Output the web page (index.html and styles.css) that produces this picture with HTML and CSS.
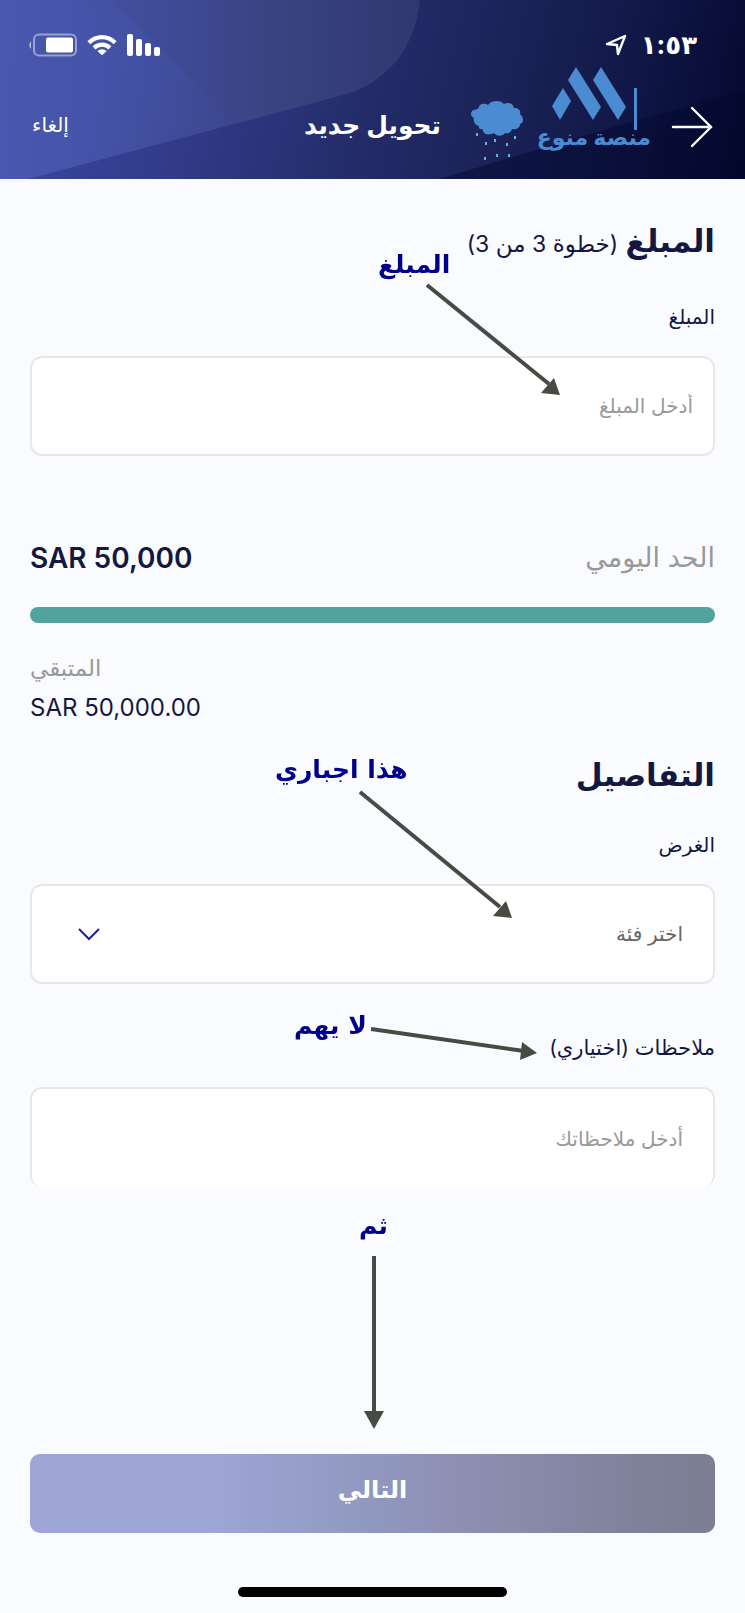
FILE: index.html
```html
<!DOCTYPE html>
<html lang="ar" dir="rtl">
<head>
<meta charset="utf-8">
<meta name="viewport" content="width=device-width, initial-scale=1">
<title>تحويل جديد</title>
<link rel="stylesheet" href="styles.css">
</head>
<body>
<div class="page">
  <header class="header">
    <svg class="header-art" viewBox="0 0 745 178" preserveAspectRatio="none" aria-hidden="true">
      <defs>
        <linearGradient id="base" x1="0" y1="0" x2="745" y2="178" gradientUnits="userSpaceOnUse">
          <stop offset="0" stop-color="#3d4aa4"/>
          <stop offset="0.25" stop-color="#323c8b"/>
          <stop offset="0.52" stop-color="#222b66"/>
          <stop offset="0.8" stop-color="#131a4a"/>
          <stop offset="1" stop-color="#03082e"/>
        </linearGradient>
        <linearGradient id="wave" x1="0" y1="0" x2="420" y2="0" gradientUnits="userSpaceOnUse">
          <stop offset="0" stop-color="#4b59ae"/>
          <stop offset="0.4" stop-color="#3f4b96"/>
          <stop offset="0.7" stop-color="#38427f"/>
          <stop offset="1" stop-color="#2f386f"/>
        </linearGradient>
        <linearGradient id="facet" x1="0" y1="0" x2="226" y2="119" gradientUnits="userSpaceOnUse">
          <stop offset="0" stop-color="#4656b4" stop-opacity="0.2"/>
          <stop offset="0.5" stop-color="#4656b4" stop-opacity="0.4"/>
          <stop offset="1" stop-color="#4656b4" stop-opacity="0.05"/>
        </linearGradient>
      </defs>
      <rect width="745" height="178" fill="url(#base)"/>
      <path d="M0 0H420C416 34 402 62 376 79C368 85 358 90 345 94L35 176L28 178H0Z" fill="url(#wave)"/>
      <path d="M0 0H108C150 36 190 76 226 119L224 126L35 176L28 178H0Z" fill="url(#facet)"/>
      <path d="M745 91C640 117 540 148 440 178H745Z" fill="#02062c" opacity="0.45"/>
    </svg>

    <div class="status">
      <div class="status-group">
        <span class="clock">١:٥٣</span>
        <svg width="22" height="22" viewBox="0 0 22 22" aria-hidden="true"><path d="M2 10L20 2L13 20L12 11Z" fill="none" stroke="#fff" stroke-width="2.400" stroke-linejoin="round"/></svg>
      </div>
      <div class="status-group">
        <svg width="36" height="24" viewBox="0 0 36 24" fill="#fff" aria-hidden="true"><rect x="1" y="1" width="6" height="22" rx="2"/><rect x="10" y="6" width="6" height="17" rx="2"/><rect x="19" y="10" width="6" height="13" rx="2"/><rect x="28" y="14" width="6" height="9" rx="2"/></svg>
        <svg width="30" height="24" viewBox="0 0 32 24" aria-hidden="true"><path d="M2 9.500C10 1.500 22 1.500 30 9.500M7.500 15C12.500 10.500 19.500 10.500 24.500 15" fill="none" stroke="#fff" stroke-width="4.500"/><path d="M11 18.500Q16 14.500 21 18.500L16 23Z" fill="#fff"/></svg>
        <svg width="50" height="24" viewBox="0 0 50 24" aria-hidden="true"><path d="M3 8Q-0.500 12 3 16Z" fill="#fff" opacity="0.6"/><rect x="6" y="1.500" width="42" height="21" rx="5" fill="none" stroke="#fff" stroke-opacity="0.45" stroke-width="2"/><rect x="18" y="4.500" width="27" height="15" rx="2" fill="#fff"/></svg>
      </div>
    </div>

    <nav class="nav">
      <div class="nav-start">
        <button class="back" type="button" aria-label="رجوع">
          <svg width="42" height="42" viewBox="0 0 42 42" aria-hidden="true"><path d="M2 21H40M21 2L40 21L21 40" fill="none" stroke="#fff" stroke-width="2.400" stroke-linecap="round"/></svg>
        </button>
        <div class="brand">
          <svg class="brand-mark" width="114" height="84" viewBox="0 0 114 84" fill="#4a8bd2" aria-hidden="true">
            <path d="M26 21L34 34L23 53L15 39Z"/><path d="M39 0L64 40L56 53L31 13Z"/><path d="M64 0L89 40L81 53L56 13Z"/><rect x="97" y="21" width="3" height="42"/>
          </svg>
          <span class="brand-name">منصة منوع</span>
        </div>
        <svg class="cloud" width="54" height="62" viewBox="0 0 54 62" aria-hidden="true">
          <path d="M9 26C5 25 3 22 4 18C0 16 0 11 4 10C7 9 8 9 9 7C10 3 15 3 18 5C21 0 31 0 34 4C38 2 43 3 44 8C49 8 51 11 50 14C54 17 54 23 50 24C50 28 46 30 42 29C41 33 37 34 35 33C32 37 26 36 24 33C18 36 12 34 13 29C10 30 8 28 9 26Z" fill="#4a8bd2"/>
          <g fill="#5ab4e6"><rect x="6" y="33" width="2" height="3"/><rect x="15" y="42" width="2" height="3"/><rect x="24" y="39" width="2" height="3"/><rect x="36" y="43" width="2" height="3"/><rect x="44" y="36" width="2" height="3"/><rect x="14" y="57" width="2" height="3"/><rect x="26" y="54" width="2" height="3"/><rect x="38" y="54" width="2" height="3"/></g>
        </svg>
      </div>
      <h1 class="nav-title">تحويل جديد</h1>
      <button class="cancel" type="button">إلغاء</button>
    </nav>
  </header>

  <form class="form">
    <h2 class="heading">المبلغ <span class="step">(خطوة 3 من 3)</span></h2>
    <label class="label" for="amount">المبلغ</label>
    <input class="field" id="amount" type="text" inputmode="decimal" placeholder="أدخل المبلغ">

    <section class="limit">
      <div class="limit-row">
        <span class="limit-name">الحد اليومي</span>
        <bdi class="limit-total">SAR 50,000</bdi>
      </div>
      <div class="meter" role="progressbar" aria-label="الحد اليومي" aria-valuenow="100"></div>
      <div class="remaining">
        <span class="remaining-name">المتبقي</span>
        <bdi class="remaining-value">SAR 50,000.00</bdi>
      </div>
    </section>

    <h2 class="heading">التفاصيل</h2>
    <label class="label label-purpose" for="purpose">الغرض</label>
    <div class="select-wrap">
      <select class="field select" id="purpose"><option>اختر فئة</option></select>
      <svg class="chevron" width="22" height="14" viewBox="0 0 22 14" aria-hidden="true"><path d="M1 2L11 12L21 2" fill="none" stroke="#1c2490" stroke-width="2"/></svg>
    </div>
    <label class="label label-notes" for="notes">ملاحظات (اختياري)</label>
    <textarea class="field notes" id="notes" placeholder="أدخل ملاحظاتك"></textarea>

    <button class="next" type="submit">التالي</button>
  </form>
  <div class="home-bar"></div>

  <div class="notes-layer">
    <svg class="arrows" width="745" height="1613" viewBox="0 0 745 1613" aria-hidden="true">
      <g stroke="#474b43" stroke-width="4"><path d="M427 285L549 384"/><path d="M360 792L500 907"/><path d="M371 1029L524 1051"/><path d="M374 1256V1413"/></g>
      <g fill="#474b43"><path d="M560 395L541 393L554 378Z"/><path d="M512 918L493 916L506 901Z"/><path d="M537 1053L520 1060L522 1042Z"/><path d="M374 1429L364 1411H384Z"/></g>
    </svg>
    <span class="note note-amount">المبلغ</span>
    <span class="note note-required">هذا اجباري</span>
    <span class="note note-skip">لا يهم</span>
    <span class="note note-then">ثم</span>
  </div>
</div>
</body>
</html>
```
FILE: styles.css
```css
* { box-sizing: border-box; }

body {
  margin: 0;
  background: #fafbff;
  color: #14183f;
  font-family: Inter, "DejaVu Sans", sans-serif;
}

button, input, select, textarea { font-family: inherit; }
button { border: 0; padding: 0; background: none; color: #fff; cursor: pointer; }

.page {
  position: relative;
  display: flex;
  flex-direction: column;
  min-height: 100vh;
}

/* Header */
.header { position: relative; color: #fff; }
.header-art { position: absolute; inset: 0; width: 100%; height: 100%; }

.status {
  position: relative;
  display: flex;
  justify-content: space-between;
  align-items: center;
  height: 67px;
  padding: 22px 48px 0 28px;
}
.status-group { display: flex; align-items: center; gap: 9px; }
.status-group:first-child { gap: 14px; }
.clock { font-size: 26px; line-height: 32px; font-weight: 700; }

.nav {
  position: relative;
  display: grid;
  grid-template-columns: 1fr auto 1fr;
  align-items: start;
  min-height: 112px;
  padding: 0 32px;
}
.nav-start { display: flex; align-items: flex-start; }
.back { display: block; height: 42px; margin-top: 39px; }
.brand { position: relative; margin-right: 20px; }
.brand-mark { display: block; }
.brand-name {
  position: absolute;
  inset: auto 0 0 0;
  color: #4a8bd2;
  font-size: 22px;
  line-height: 28px;
  font-weight: 700;
  text-align: center;
  white-space: nowrap;
}
.cloud { margin: 33px 13px 0 0; flex: none; }
.nav-title { margin: 38px 0 0; font-size: 25px; line-height: 40px; font-weight: 700; }
.cancel { justify-self: end; margin-top: 38px; font-size: 20px; line-height: 40px; }

/* Form */
.form {
  display: flex;
  flex-direction: column;
  flex: 1;
  padding: 32px 30px 0;
}
.heading { margin: 0; font-size: 31px; line-height: 60px; font-weight: 700; }
.step { font-size: 23px; font-weight: 400; }
.label { margin: 25px 0 21px; font-size: 20px; line-height: 36px; }

.field {
  display: block;
  width: 100%;
  height: 100px;
  padding: 0 20px;
  border: 2px solid #e7e7e7;
  border-radius: 12px;
  background: #fff;
  color: #666;
  font-size: 20px;
}
.field::placeholder { color: #999; opacity: 1; }

.limit { padding-top: 82px; }
.limit-row { display: flex; justify-content: space-between; align-items: center; line-height: 40px; }
.limit-name { color: #999; font-size: 27px; }
.limit-total { font-size: 28px; font-weight: 600; }
.meter { height: 16px; margin-top: 29px; border-radius: 8px; background: #52a39e; }
.remaining {
  display: flex;
  flex-direction: column;
  align-items: flex-end;
  margin: 25px 0 17px;
  line-height: 40px;
}
.remaining-name { color: #999; font-size: 23px; }
.remaining-value { font-size: 24px; }

.select-wrap { position: relative; }
.select { appearance: none; padding: 0 30px; }
.chevron { position: absolute; left: 48px; top: 43px; pointer-events: none; }

.label-purpose { margin-top: 22px; }
.label-notes { margin-top: 46px; font-size: 21px; }
.notes { padding: 32px 30px; border-bottom: 0; line-height: 36px; resize: none; }

.next {
  height: 79px;
  margin-top: auto;
  padding-bottom: 8px;
  border-radius: 10px;
  background: linear-gradient(90deg, #9fa5d5 0%, #9fa5d5 26%, #9098bf 50%, #8e90b3 62%, #7e8199 90%, #7c7f92 100%);
  font-size: 24px;
  font-weight: 700;
}
.home-bar {
  width: 36%;
  height: 10px;
  margin: 54px auto 16px;
  border-radius: 5px;
  background: #000;
}

/* Tutorial annotations over the screen */
.notes-layer { position: absolute; top: 0; left: 0; pointer-events: none; }
.arrows { display: block; }
.note {
  position: absolute;
  color: #00008b;
  font-family: "DejaVu Sans", sans-serif;
  font-size: 25px;
  line-height: 40px;
  font-weight: 700;
  white-space: nowrap;
}
.note-amount { left: 378px; top: 245px; }
.note-required { left: 275px; top: 750px; }
.note-skip { left: 294px; top: 1006px; }
.note-then { left: 359px; top: 1206px; }
```
